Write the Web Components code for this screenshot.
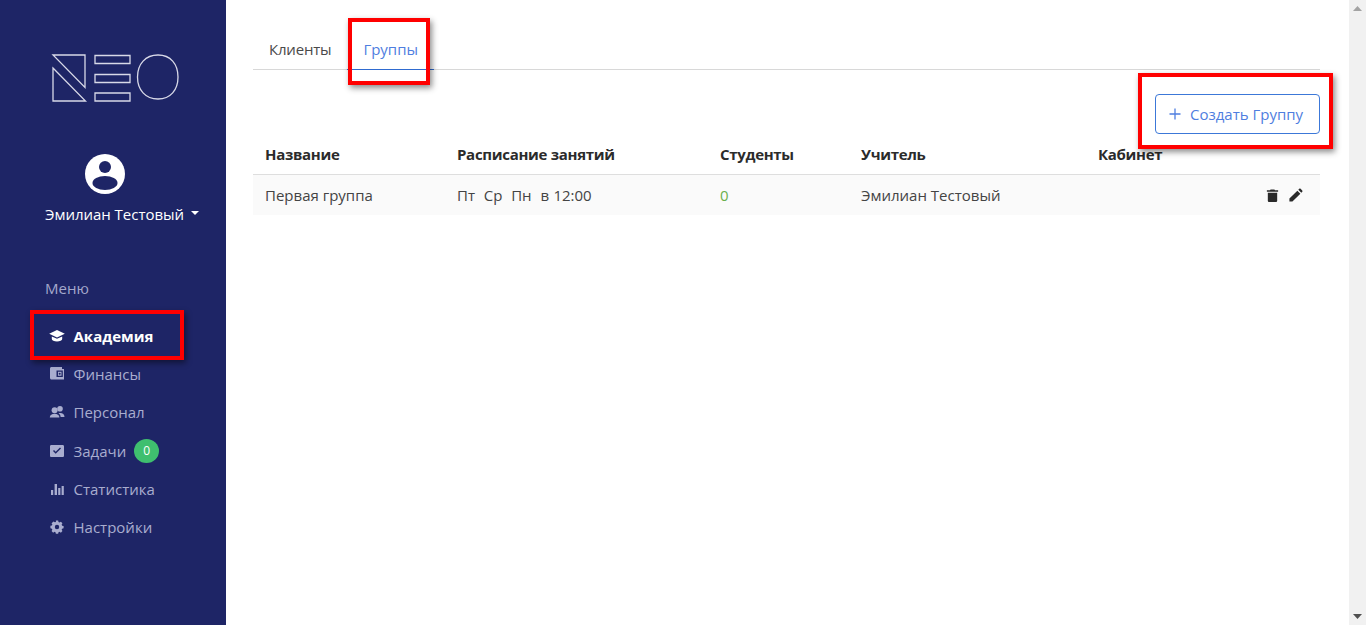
<!DOCTYPE html>
<html lang="ru">
<head>
<meta charset="utf-8">
<title>Neo</title>
<style>
  html, body { margin: 0; height: 100%; overflow: hidden; }
  body { font-family: "Open Sans", "Noto Sans", sans-serif; color: #333; background: #fff; }
  neo-app { height: 625px; }
</style>
</head>
<body>
<neo-app>
  <neo-sidebar slot="side">
    <neo-nav-item icon="cap" active>Академия</neo-nav-item>
    <neo-nav-item icon="wallet">Финансы</neo-nav-item>
    <neo-nav-item icon="people">Персонал</neo-nav-item>
    <neo-nav-item icon="check" badge="0">Задачи</neo-nav-item>
    <neo-nav-item icon="bars">Статистика</neo-nav-item>
    <neo-nav-item icon="cog">Настройки</neo-nav-item>
  </neo-sidebar>
  <neo-groups slot="main"></neo-groups>
</neo-app>

<script>
const ICONS = {
  cap: '<path d="M8 2 15.800 5.800 8 9.400.2 5.800z"/><path d="M2.800 8.400 8 10.800l5.200-2.400v2.700C13.200 12.500 10.800 13.600 8 13.600s-5.200-1.100-5.200-2.500z"/>',
  wallet: '<path fill-rule="evenodd" d="M1 2.500C1 1.700 1.700 1 2.500 1H13v2h2v10.500H2.500C1.700 13.500 1 12.800 1 12V2.500zM7.500 4.500v6.500H13.800V4.500zM9 5.800h3.500v3.900H9zM10.700 6.800a1 1 0 1 0 0 2 1 1 0 0 0 0-2z"/>',
  people: '<circle cx="5.600" cy="6.200" r="3"/><path d="M.8 13.500c0-2.500 2.200-3.700 4.800-3.700s4.800 1.200 4.800 3.700z"/><circle cx="11" cy="4.800" r="2.800"/><path d="M11.600 13h3.900c0-2.600-1.800-4-4.300-4-.6 0-1.200.1-1.700.3 1.300.9 2.100 2.100 2.100 3.700z"/>',
  check: '<path fill-rule="evenodd" d="M2.300 2h11.400c.7 0 1.300.6 1.300 1.300v9.400c0 .7-.6 1.300-1.300 1.300H2.300c-.7 0-1.300-.6-1.300-1.300V3.300C1 2.600 1.600 2 2.300 2zM4 8l2.700 2.700 5.300-5.200-1-1-4.300 4.200L5 7z"/>',
  bars: '<path d="M2 9h2.200v5H2zM5.600 3h2.400v11H5.600zM9.200 7h2.200v7H9.200zM12.600 5h2.200v9h-2.200z"/>',
  cog: '<path fill-rule="evenodd" d="M6.700 1.500h2.600l.4 1.700 1.200.5 1.500-.9 1.800 1.800-.9 1.500.5 1.200 1.700.4v2.600l-1.700.4-.5 1.200.9 1.500-1.800 1.800-1.500-.9-1.200.5-.4 1.700H6.700l-.4-1.700-1.200-.5-1.500.9-1.800-1.800.9-1.500-.5-1.200-1.700-.4V7.500l1.700-.4.5-1.200-.9-1.500L4.100 2.600l1.500.9 1.200-.5zM8 6.300a2.500 2.500 0 1 0 0 5 2.500 2.500 0 0 0 0-5z" transform="translate(8 8) scale(.88) translate(-8 -8.800)"/>'
};

class NeoApp extends HTMLElement {
  constructor() {
    super();
    this.attachShadow({ mode: 'open' }).innerHTML = `
      <style>
        :host { display: flex; width: 1366px; position: relative; overflow: hidden; }
        .main { flex: 1; min-width: 0; }
        .scroll { width: 17px; background: #f1f1f1; display: flex; flex-direction: column; justify-content: space-between; align-items: center; padding: 6px 0; box-sizing: border-box; }
        .scroll svg { display: block; }
      </style>
      <slot name="side"></slot>
      <div class="main"><slot name="main"></slot></div>
      <div class="scroll">
        <svg width="9" height="5" viewBox="0 0 9 5"><path d="M4.500 0 9 5H0z" fill="#a3a3a3"/></svg>
        <svg width="9" height="5" viewBox="0 0 9 5"><path d="M0 0h9L4.500 5z" fill="#505050"/></svg>
      </div>`;
  }
}

class NeoSidebar extends HTMLElement {
  constructor() {
    super();
    this.attachShadow({ mode: 'open' }).innerHTML = `
      <style>
        :host { display: block; width: 226px; height: 625px; background: #1e2566; color: #fff; flex: none; box-sizing: border-box; position: relative; }
        .logo { display: block; padding: 54px 0 0 51px; height: 48px; width: 130px; box-sizing: content-box; }
        .user { margin-top: 52px; display: flex; flex-direction: column; align-items: flex-start; }
        .ava { display: block; width: 40px; height: 40px; margin-left: 85px; }
        .name { margin: 9px 0 0 45px; font-size: 15px; line-height: 22px; height: 22px; display: flex; align-items: center; gap: 7px; color: #fff; letter-spacing: -.03px; }
        .caret { width: 0; height: 0; border-left: 4.500px solid transparent; border-right: 4.500px solid transparent; border-top: 4px solid #fff; margin-top: -3px; }
        .label { margin: 52px 0 0 45px; font-size: 15px; line-height: 22px; color: #a4a8cc; }
        nav { margin-top: 18px; display: flex; flex-direction: column; }
      </style>
      <svg class="logo" viewBox="51 54 130 48" fill="none" stroke="#d8d9e8" stroke-width="1.300">
        <path d="M53 55h32v32.500zM53 68l32.500 33H53z"/>
        <path d="M95 55.500h35v8H95zM95 74.500h35v8H95zM95 93h35v8H95z"/>
        <path d="M158 55c12.500 0 20 9 20 22s-7.500 22-20 22-20.500-9-20.500-22 8-22 20.500-22z"/>
      </svg>
      <div class="user">
        <svg class="ava" viewBox="0 0 40 40"><circle cx="20" cy="20" r="20" fill="#fff"/><circle cx="20" cy="13" r="6" fill="#1e2566"/><ellipse cx="20" cy="29" rx="12.500" ry="7" fill="#1e2566"/></svg>
        <div class="name">Эмилиан Тестовый<span class="caret"></span></div>
      </div>
      <div class="label">Меню</div>
      <nav><slot></slot></nav>`;
  }
}

class NeoNavItem extends HTMLElement {
  constructor() {
    super();
    const icon = ICONS[this.getAttribute('icon')] || '';
    const badge = this.getAttribute('badge');
    this.attachShadow({ mode: 'open' }).innerHTML = `
      <style>
        :host { display: block; height: 38.200px; color: #a9adcf; font-size: 15px; }
        :host([active]) { color: #fff; font-weight: 700; }
        .row { height: 100%; display: flex; align-items: center; padding-left: 49px; }
        svg { width: 16px; height: 16px; fill: currentColor; margin-right: 8.500px; flex: none; }
        .badge { margin-left: 8px; width: 25px; height: 24px; border-radius: 50%; background: #3fbf6f; color: #fff; font-size: 12px; font-weight: 400; display: flex; align-items: center; justify-content: center; }
      </style>
      <div class="row">
        <svg viewBox="0 0 16 16">${icon}</svg>
        <slot></slot>
        ${badge !== null ? `<span class="badge">${badge}</span>` : ''}
      </div>`;
  }
}

class NeoTabs extends HTMLElement {
  constructor() {
    super();
    this.attachShadow({ mode: 'open' }).innerHTML = `
      <style>
        :host { display: flex; border-bottom: 1px solid #d8d8d8; height: 38px; margin-top: 31px; font-size: 15px; color: #4a4a4a; }
        span { padding: 0 16px; line-height: 36px; height: 38px; box-sizing: content-box; }
        span.off { letter-spacing: -.2px; }
        span.on { color: #4f7ee0; border-bottom: 1px solid #2f6bd0; }
      </style>
      <span class="off">Клиенты</span>
      <span class="on">Группы</span>`;
  }
}

class NeoButton extends HTMLElement {
  constructor() {
    super();
    this.attachShadow({ mode: 'open' }).innerHTML = `
      <style>
        :host { display: flex; align-items: center; width: 165px; height: 40px; box-sizing: border-box; border: 1px solid #3c78d8; border-radius: 4px; color: #4f7ee0; font-size: 15px; padding-left: 13px; }
        svg { width: 12px; height: 12px; margin-right: 9px; flex: none; }
      </style>
      <svg viewBox="0 0 12 12"><path d="M6 .5v11M.5 6h11" stroke="#4f7ee0" stroke-width="1.300"/></svg>
      <slot></slot>`;
  }
}

class NeoTableRow extends HTMLElement {
  constructor() {
    super();
    this.attachShadow({ mode: 'open' }).innerHTML = `
      <style>
        :host { display: grid; grid-template-columns: 192px 263px 141px 237px 1fr; padding-left: 12px; align-items: center; font-size: 15px; color: #444; }
        :host([head]) { padding-bottom: 2px; height: 37px; font-weight: 700; letter-spacing: -.3px; color: #2b2b2b; border-bottom: 1px solid #dedede; }
        :host(:not([head])) { height: 40px; background: #fafafa; }
      </style>
      <slot></slot>`;
  }
}

class NeoGroups extends HTMLElement {
  constructor() {
    super();
    this.attachShadow({ mode: 'open' }).innerHTML = `
      <style>
        :host { display: block; padding-left: 27px; padding-right: 29px; }
        .bar { display: flex; justify-content: flex-end; margin-top: 24px; margin-bottom: 1px; }
        .on-green { color: #6ab04c; }
        .acts { display: flex; justify-content: flex-end; gap: 8px; padding-right: 17px; align-items: center; }
        .acts svg { width: 15px; height: 15px; fill: #2a2a2a; display: block; }
        .sch { white-space: pre; word-spacing: .5px; }
        .ann { position: fixed; box-sizing: border-box; border: 4px solid #f00; box-shadow: 2px 3px 6px rgba(0,0,0,.45); pointer-events: none; }
      </style>
      <neo-tabs></neo-tabs>
      <div class="bar"><neo-button>Создать Группу</neo-button></div>
      <neo-table-row head>
        <span>Название</span><span>Расписание занятий</span><span>Студенты</span><span>Учитель</span><span>Кабинет</span>
      </neo-table-row>
      <neo-table-row>
        <span>Первая группа</span><span class="sch">Пт  Ср  Пн  в 12:00</span><span class="on-green">0</span><span>Эмилиан Тестовый</span>
        <span class="acts">
          <svg viewBox="0 0 16 16"><path d="M6 1.500h4l.7 1H14v1.600H2V2.500h3.300zM3 5h10v8.500c0 .8-.7 1.500-1.500 1.500h-7C3.700 15 3 14.300 3 13.500z"/></svg>
          <svg viewBox="0 0 16 16"><path d="M1.500 11.300 10 2.800l3.200 3.200-8.500 8.500H1.500zM11 1.800l1-1c.4-.4 1-.4 1.400 0l1.800 1.800c.4.400.4 1 0 1.400l-1 1z"/></svg>
        </span>
      </neo-table-row>
      <div class="ann" style="left:348px;top:18px;width:82px;height:67px"></div>
      <div class="ann" style="left:1138px;top:73px;width:195px;height:76px"></div>
      <div class="ann" style="left:30px;top:310px;width:154px;height:50px"></div>`;
  }
}

customElements.define('neo-app', NeoApp);
customElements.define('neo-sidebar', NeoSidebar);
customElements.define('neo-nav-item', NeoNavItem);
customElements.define('neo-tabs', NeoTabs);
customElements.define('neo-button', NeoButton);
customElements.define('neo-table-row', NeoTableRow);
customElements.define('neo-groups', NeoGroups);
</script>
</body>
</html>
